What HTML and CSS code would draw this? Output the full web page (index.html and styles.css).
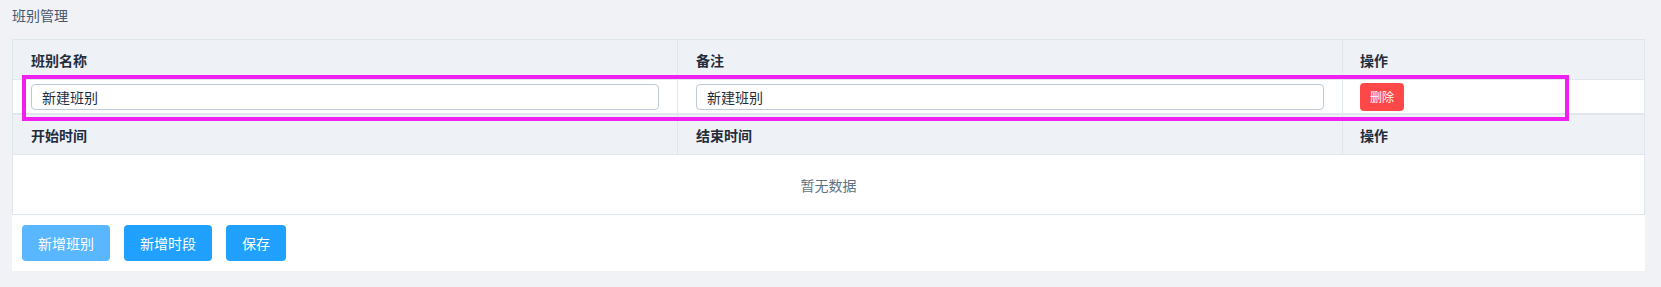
FILE: index.html
```html
<!DOCTYPE html>
<html lang="zh-CN">
<head>
<meta charset="utf-8">
<title>班别管理</title>
<link rel="stylesheet" href="styles.css">
</head>
<body>
<div class="page">
  <div class="title">班别管理</div>
  <div class="panel">
    <div class="table">
      <div class="row head">
        <div class="cell">班别名称</div>
        <div class="cell">备注</div>
        <div class="cell">操作</div>
      </div>
      <div class="row body">
        <div class="cell"><input class="input" type="text" value="新建班别"></div>
        <div class="cell"><input class="input" type="text" value="新建班别"></div>
        <div class="cell"><button class="btn-del" type="button">删除</button></div>
      </div>
    </div>
    <div class="table">
      <div class="row head">
        <div class="cell">开始时间</div>
        <div class="cell">结束时间</div>
        <div class="cell">操作</div>
      </div>
      <div class="empty">暂无数据</div>
    </div>
    <div class="actions">
      <button class="btn btn-light" type="button">新增班别</button>
      <button class="btn btn-primary" type="button">新增时段</button>
      <button class="btn btn-primary" type="button">保存</button>
    </div>
  </div>
  <div class="highlight"></div>
</div>
</body>
</html>
```
FILE: styles.css
```css
* {
  box-sizing: border-box;
}

html, body {
  margin: 0;
  padding: 0;
  background: #f0f2f6;
}

body {
  font-family: "Noto Sans CJK SC", "Noto Sans", "Liberation Sans", sans-serif;
  font-size: 14px;
  color: #1f2d3d;
}

.page {
  position: relative;
  padding: 0 16px 16px 12px;
}

.title {
  padding-top: 5px;
  height: 39px;
  line-height: 20px;
  font-size: 14px;
  color: #48576a;
}

.panel {
  background: #ffffff;
}

.table {
  border: 1px solid #dfe6ec;
}

.row {
  display: grid;
  grid-template-columns: 665px 665px 1fr;
}

.row.head {
  height: 40px;
  background: #eef1f6;
  border-bottom: 1px solid #dfe6ec;
  font-weight: bold;
  color: #1f2d3d;
}

.row.body {
  height: 33px;
  background: #ffffff;
}

.cell {
  display: flex;
  align-items: center;
  padding: 0 18px;
  border-right: 1px solid #dfe6ec;
  min-width: 0;
}

.cell:last-child {
  border-right: none;
  padding: 0 17px;
}

.input {
  width: 100%;
  height: 26px;
  border: 1px solid #bfcbd9;
  border-radius: 4px;
  padding: 0 10px;
  font-family: inherit;
  font-size: 14px;
  color: #1f2d3d;
  background: #ffffff;
  outline: none;
}

.btn-del {
  width: 44px;
  height: 28px;
  border: none;
  border-radius: 4px;
  background: #ff4949;
  color: #ffffff;
  font-family: inherit;
  font-size: 12px;
  padding: 0;
}

.empty {
  height: 59px;
  display: flex;
  align-items: center;
  justify-content: center;
  color: #5e7382;
  font-size: 14px;
}

.actions {
  display: flex;
  gap: 14px;
  padding: 10px 10px;
}

.btn {
  height: 36px;
  padding: 0 16px;
  border: none;
  border-radius: 4px;
  color: #ffffff;
  font-family: inherit;
  font-size: 14px;
}

.btn-primary {
  background: #20a0ff;
}

.btn-light {
  background: #58b7ff;
}

.highlight {
  position: absolute;
  left: 22px;
  top: 75px;
  width: 1547px;
  height: 46px;
  border: 4px solid #f020f0;
  pointer-events: none;
}
```
